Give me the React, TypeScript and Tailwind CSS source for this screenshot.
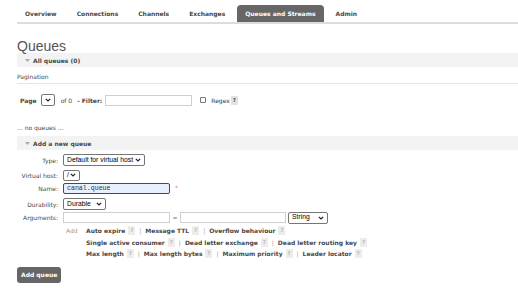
import React from "react";

const Chevron = () => (
  <svg width="6" height="4" viewBox="0 0 6 4" className="shrink-0">
    <path d="M0.8 0.8 L3 3 L5.2 0.8" fill="none" stroke="#222" strokeWidth="1.2" />
  </svg>
);

const Tri = () => (
  <svg width="5" height="3" viewBox="0 0 5 3" className="shrink-0">
    <path d="M0 0 L5 0 L2.5 3 Z" fill="#aaa" />
  </svg>
);

const Select = ({ w, h, text }: { w: string; h: string; text?: string }) => (
  <div
    className={`${w} ${h} flex items-center justify-between border border-[#767676] rounded-[2px] bg-white pl-[3px] pr-[3px] font-['Liberation_Sans',Arial,sans-serif] text-[6.8px] text-black`}
  >
    <span className="whitespace-nowrap">{text}</span>
    <Chevron />
  </div>
);

const Help = ({ light }: { light?: boolean }) =>
  light ? (
    <span className="inline-flex w-[7px] h-[9px] items-center justify-center bg-[#ececec] text-[#bbb] text-[5.5px] font-bold ml-[3px]">?</span>
  ) : (
    <span className="inline-flex w-[7px] h-[9px] items-center justify-center bg-[#e2e2e2] text-[#555] text-[5.5px] font-bold ml-[1px]">?</span>
  );

const Sep = () => <span className="text-[#999] mx-[4px]">|</span>;

const Arg = ({ t, last }: { t: string; last?: boolean }) => (
  <>
    <span className="font-bold text-[#484848] whitespace-nowrap">{t}</span>
    <Help light />
    {!last && <Sep />}
  </>
);

export default function App() {
  const tabs = ["Overview", "Connections", "Channels", "Exchanges", "Queues and Streams", "Admin"];
  return (
    <div className="w-[518px] h-[288px] overflow-hidden bg-white text-[#484848] font-['DejaVu_Sans',Verdana,sans-serif] text-[6px]">
      <div className="pl-[17px] pt-[5px]">
        <div className="flex h-[19px] border-b-2 border-[#dcdcdc] gap-[4px]">
          {tabs.map((t) => (
            <div
              key={t}
              className={
                t === "Queues and Streams"
                  ? "h-[17px] px-[8px] flex items-center font-bold bg-[#666] text-white rounded-t-[4px] whitespace-nowrap"
                  : "h-[17px] px-[8px] flex items-center font-bold text-[#484848] whitespace-nowrap"
              }
            >
              {t}
            </div>
          ))}
        </div>
      </div>

      <div className="pl-[17px]">
        <div className="h-[29px] flex items-end">
          <h1 className="font-['Liberation_Sans',Arial,sans-serif] text-[14px] leading-[14px] text-[#555] font-normal">Queues</h1>
        </div>
        <div className="h-[14px] bg-[#f3f3f3] flex items-center pl-[8px] gap-[3px]">
          <Tri />
          <span className="font-bold">All queues (0)</span>
        </div>

        <div className="h-[17px] flex items-end border-b border-[#e4e4e4]">
          <span className="leading-[10px] pb-[1px]">Pagination</span>
        </div>

        <div className="mt-[10px] h-[12px] flex items-center pl-[3px]">
          <span className="font-bold">Page</span>
          <div className="ml-[4px]">
            <Select w="w-[14px]" h="h-[12px]" />
          </div>
          <span className="ml-[6px]">of 0</span>
          <span className="ml-[5px] font-bold">- Filter:</span>
          <div className="ml-[3px] w-[87px] h-[11px] border border-[#cfcfcf] bg-white" />
          <div className="ml-[8px] w-[6px] h-[6px] border border-[#767676] rounded-[1px] bg-white" />
          <span className="ml-[5px] text-[#333]">Regex</span>
          <Help />
        </div>

        <div className="mt-[17px] h-[8px] flex items-center">... no queues ...</div>

        <div className="mt-[5px] h-[14px] bg-[#f3f3f3] flex items-center pl-[8px] gap-[3px]">
          <Tri />
          <span className="font-bold">Add a new queue</span>
        </div>

        <div className="mt-[4px] flex flex-col">
          <div className="h-[12px] flex items-center">
            <span className="w-[41px] text-right whitespace-nowrap">Type:</span>
            <div className="ml-[5px]">
              <Select w="w-[82px]" h="h-[12px]" text="Default for virtual host" />
            </div>
          </div>
          <div className="mt-[4px] h-[10px] flex items-center">
            <span className="w-[41px] text-right whitespace-nowrap">Virtual host:</span>
            <div className="ml-[5px]">
              <Select w="w-[17px]" h="h-[11px]" text="/" />
            </div>
          </div>
          <div className="mt-[3px] h-[11px] flex items-center">
            <span className="w-[41px] text-right whitespace-nowrap">Name:</span>
            <div className="ml-[5px] w-[107px] h-[11px] border border-[#4a4a4a] rounded-[2px] bg-[#e8f0fe] flex items-center pl-[3px] font-['Liberation_Mono','Courier_New',monospace] text-[6.6px] text-[#333]">
              canal.queue
            </div>
            <span className="ml-[5px] text-[#e57373] text-[6px] -mt-[2px]">*</span>
          </div>
          <div className="mt-[4px] h-[12px] flex items-center">
            <span className="w-[41px] text-right whitespace-nowrap">Durability:</span>
            <div className="ml-[5px]">
              <Select w="w-[43px]" h="h-[12px]" text="Durable" />
            </div>
          </div>
          <div className="mt-[2px] h-[11px] flex items-center">
            <span className="w-[41px] text-right whitespace-nowrap">Arguments:</span>
            <div className="ml-[5px] w-[107px] h-[11px] border border-[#cfcfcf] bg-white" />
            <span className="w-[10px] text-center text-[#777]">=</span>
            <div className="w-[106px] h-[11px] border border-[#cfcfcf] bg-white" />
            <div className="ml-[2px]">
              <Select w="w-[40px]" h="h-[12px]" text="String" />
            </div>
          </div>

          <div className="mt-[2px] flex">
            <div className="w-[69px] pl-[49px] leading-[11.5px] text-[#999]">Add</div>
            <div className="flex flex-col leading-[11.5px]">
              <div className="flex items-center h-[11.5px]">
                <Arg t="Auto expire" />
                <Arg t="Message TTL" />
                <Arg t="Overflow behaviour" last />
              </div>
              <div className="flex items-center h-[11.5px]">
                <Arg t="Single active consumer" />
                <Arg t="Dead letter exchange" />
                <Arg t="Dead letter routing key" last />
              </div>
              <div className="flex items-center h-[11.5px]">
                <Arg t="Max length" />
                <Arg t="Max length bytes" />
                <Arg t="Maximum priority" />
                <Arg t="Leader locator" last />
              </div>
            </div>
          </div>
        </div>

        <div className="mt-[7px]">
          <button className="h-[16px] px-[4px] bg-[#666] text-white font-bold rounded-[3px] text-[6px]">Add queue</button>
        </div>
      </div>
    </div>
  );
}
